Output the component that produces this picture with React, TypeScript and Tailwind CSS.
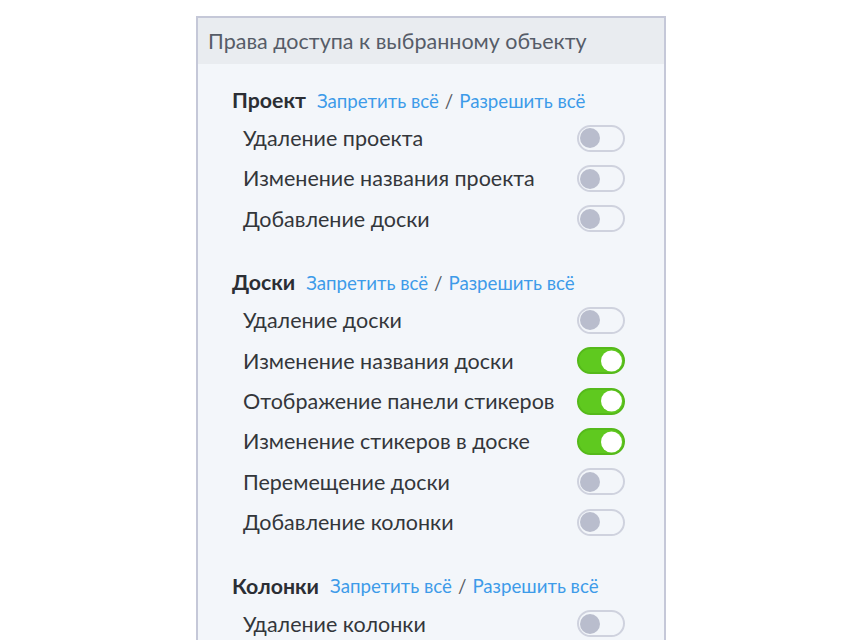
import { useState } from 'react'

type Perm = { label: string; on: boolean }
type Section = { title: string; items: Perm[] }

const initial: Section[] = [
  {
    title: 'Проект',
    items: [
      { label: 'Удаление проекта', on: false },
      { label: 'Изменение названия проекта', on: false },
      { label: 'Добавление доски', on: false },
    ],
  },
  {
    title: 'Доски',
    items: [
      { label: 'Удаление доски', on: false },
      { label: 'Изменение названия доски', on: true },
      { label: 'Отображение панели стикеров', on: true },
      { label: 'Изменение стикеров в доске', on: true },
      { label: 'Перемещение доски', on: false },
      { label: 'Добавление колонки', on: false },
    ],
  },
  {
    title: 'Колонки',
    items: [{ label: 'Удаление колонки', on: false }],
  },
]

function Toggle({ on, onClick }: { on: boolean; onClick: () => void }) {
  return (
    <button
      type="button"
      onClick={onClick}
      className={
        on
          ? 'relative w-[48px] h-[27px] rounded-full border-2 border-[#55b91a] bg-[#5fc91f] shrink-0'
          : 'relative w-[48px] h-[27px] rounded-full border-2 border-[#cfd2de] bg-transparent shrink-0'
      }
    >
      <span
        className={
          on
            ? 'absolute right-[1px] top-1/2 -translate-y-1/2 w-[21px] h-[21px] rounded-full bg-white'
            : 'absolute left-[1px] top-1/2 -translate-y-1/2 w-[20px] h-[20px] rounded-full bg-[#b9bdcd]'
        }
      />
    </button>
  )
}

export default function App() {
  const [sections, setSections] = useState(initial)

  const setAll = (si: number, value: boolean) =>
    setSections(s => s.map((sec, i) => (i === si ? { ...sec, items: sec.items.map(it => ({ ...it, on: value })) } : sec)))

  const flip = (si: number, ii: number) =>
    setSections(s =>
      s.map((sec, i) =>
        i === si ? { ...sec, items: sec.items.map((it, j) => (j === ii ? { ...it, on: !it.on } : it)) } : sec
      )
    )

  return (
    <div className="w-[860px] h-[640px] bg-white overflow-hidden font-['Lato','Noto_Sans',sans-serif]">
      <div className="ml-[196px] mt-[16px] w-[470px] h-[640px] border-2 border-[#c5c8d8] bg-[#f3f6fa]">
        <div className="h-[46px] bg-[#e9ecf0] flex items-center pl-[10px] text-[21.5px] text-[#565c68]">
          Права доступа к выбранному объекту
        </div>
        <div className="pt-[22px] pl-[34px] pr-[39px] flex flex-col gap-[29px]">
          {sections.map((sec, si) => (
            <div key={sec.title}>
              <div className="h-[30px] mb-[2px] flex items-center">
                <span className="font-bold text-[21.3px] text-[#2b2e34] mr-[11px]">{sec.title}</span>
                <button type="button" onClick={() => setAll(si, false)} className="text-[18.7px] text-[#3d9be9]">
                  Запретить всё
                </button>
                <span className="text-[18.7px] text-[#555a63] mx-[6px]">/</span>
                <button type="button" onClick={() => setAll(si, true)} className="text-[18.7px] text-[#3d9be9]">
                  Разрешить всё
                </button>
              </div>
              {sec.items.map((it, ii) => (
                <div key={it.label} className="h-[40.4px] flex items-center justify-between pl-[11px]">
                  <span className="text-[21.5px] text-[#33363b]">{it.label}</span>
                  <Toggle on={it.on} onClick={() => flip(si, ii)} />
                </div>
              ))}
            </div>
          ))}
        </div>
      </div>
    </div>
  )
}
